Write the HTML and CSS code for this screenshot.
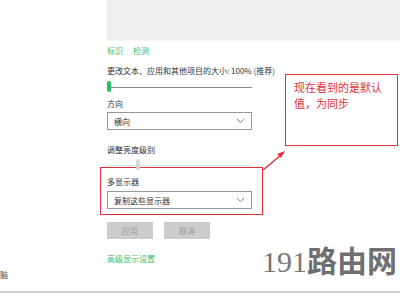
FILE: index.html
```html
<!DOCTYPE html>
<html lang="zh-CN">
<head>
    <meta charset="UTF-8">
    <title>显示设置</title>
    <link rel="stylesheet" href="styles.css">
</head>
<body>
    <div class="page">
        <div class="settings">
            <div class="preview"></div>
            <div class="links">
                <span class="link">标识</span>
                <span class="link">检测</span>
            </div>
            <p class="label size-label">更改文本、应用和其他项目的大小: 100% (推荐)</p>
            <div class="slider">
                <div class="track"></div>
                <div class="thumb green"></div>
            </div>
            <p class="label dir-label">方向</p>
            <div class="select">
                <span>横向</span>
                <svg class="chevron" width="9" height="6" viewBox="0 0 9 6"><path d="M1 1 L4.5 4.5 L8 1" fill="none" stroke="#888" stroke-width="1"/></svg>
            </div>
            <p class="label bright-label">调整亮度级别</p>
            <div class="slider faded">
                <div class="track light"></div>
                <div class="thumb grey"></div>
            </div>
            <div class="highlight">
                <p class="label">多显示器</p>
                <div class="select">
                    <span>复制这些显示器</span>
                    <svg class="chevron" width="9" height="6" viewBox="0 0 9 6"><path d="M1 1 L4.5 4.5 L8 1" fill="none" stroke="#888" stroke-width="1"/></svg>
                </div>
            </div>
            <div class="buttons">
                <button class="btn">应用</button>
                <button class="btn">取消</button>
            </div>
            <p class="link advanced">高级显示设置</p>
        </div>

        <!-- annotation -->
        <div class="note">现在看到的是默认值，为同步</div>
        <svg class="arrow" width="30" height="30" viewBox="0 0 30 30">
            <line x1="3" y1="24" x2="21" y2="9" stroke="#e0303a" stroke-width="1.5"/>
            <path d="M25 5 L17 8 L21 12 Z" fill="#e0303a"/>
        </svg>

        <div class="stub">脑</div>
        <div class="watermark"><span class="num">191</span>路由网</div>
        <div class="bottom-line"></div>
    </div>
</body>
</html>
```

FILE: styles.css
```css
body {
    margin: 0;
    background-color: #fff;
    font-family: "Noto Sans CJK SC", "Liberation Sans", sans-serif;
    color: #333;
}

.page {
    position: relative;
    width: 400px;
    height: 294px;
    overflow: hidden;
}

.settings {
    display: flex;
    flex-direction: column;
    align-items: flex-start;
}

.preview {
    margin-left: 107px;
    width: 293px;
    height: 40px;
    background-color: #f0f0f0;
    box-shadow: 0 1px 2px #f4f4f4;
}

.links {
    display: flex;
    gap: 10px;
    margin: 5px 0 0 107px;
}

.link {
    font-size: 8px;
    line-height: 12px;
    color: #3dbb6f;
}

.label {
    margin: 0 0 0 107px;
    font-size: 8px;
    line-height: 12px;
    color: #333;
}

.size-label {
    margin-top: 8px;
}

.dir-label {
    margin-top: 5px;
}

.slider {
    position: relative;
    margin-left: 107px;
    width: 145px;
    height: 12px;
    margin-top: 4px;
}

.track {
    position: absolute;
    left: 2px;
    right: 0;
    top: 6px;
    height: 1px;
    background-color: #888;
}

.track.light {
    background-color: #e4e4e4;
}

.thumb {
    position: absolute;
    top: 0;
    width: 4px;
    height: 11px;
    border-radius: 2px;
}

.thumb.green {
    left: 0;
    background-color: #1fc45c;
}

.thumb.grey {
    left: 29px;
    background-color: #d8d8d8;
}

.select {
    display: flex;
    align-items: center;
    justify-content: space-between;
    box-sizing: border-box;
    margin: 2px 0 0 107px;
    width: 145px;
    height: 18px;
    padding: 0 6px 0 6px;
    border: 1px solid #999;
    font-size: 8px;
    color: #333;
}

.chevron {
    display: block;
}

.bright-label {
    margin-top: 14px;
}

.faded {
    margin-top: 3px;
}

.highlight {
    margin: -4px 0 0 100px;
    width: 163px;
    box-sizing: border-box;
    padding: 8px 0 5px 0;
    border: 1px solid #e0303a;
}

.highlight .label,
.highlight .select {
    margin-left: 6px;
}

.highlight .select {
    margin-top: 3px;
}

.buttons {
    display: flex;
    gap: 11px;
    margin: 7px 0 0 107px;
}

.btn {
    width: 46px;
    height: 17px;
    padding: 0;
    border: none;
    background-color: #cccccc;
    color: #999;
    font-family: "Noto Sans CJK SC", sans-serif;
    font-size: 8px;
}

.advanced {
    margin: 14px 0 0 107px;
}

.note {
    position: absolute;
    left: 285px;
    top: 74px;
    width: 113px;
    height: 72px;
    box-sizing: border-box;
    padding: 4px 8px;
    border: 1px solid #e0303a;
    color: #e0303a;
    font-size: 11px;
    line-height: 16px;
}

.arrow {
    position: absolute;
    left: 260px;
    top: 146px;
}

.stub {
    position: absolute;
    left: 0;
    top: 269px;
    font-size: 8px;
    color: #444;
}

.watermark {
    position: absolute;
    left: 262px;
    top: 240px;
    font-size: 30px;
    line-height: 38px;
    font-weight: bold;
    color: #6f6f6f;
}

.watermark .num {
    font-family: "Liberation Serif", serif;
    font-weight: normal;
    color: #777;
}

.bottom-line {
    position: absolute;
    left: 0;
    right: 0;
    bottom: 1px;
    height: 2px;
    background-color: #d0d0d0;
}
```
